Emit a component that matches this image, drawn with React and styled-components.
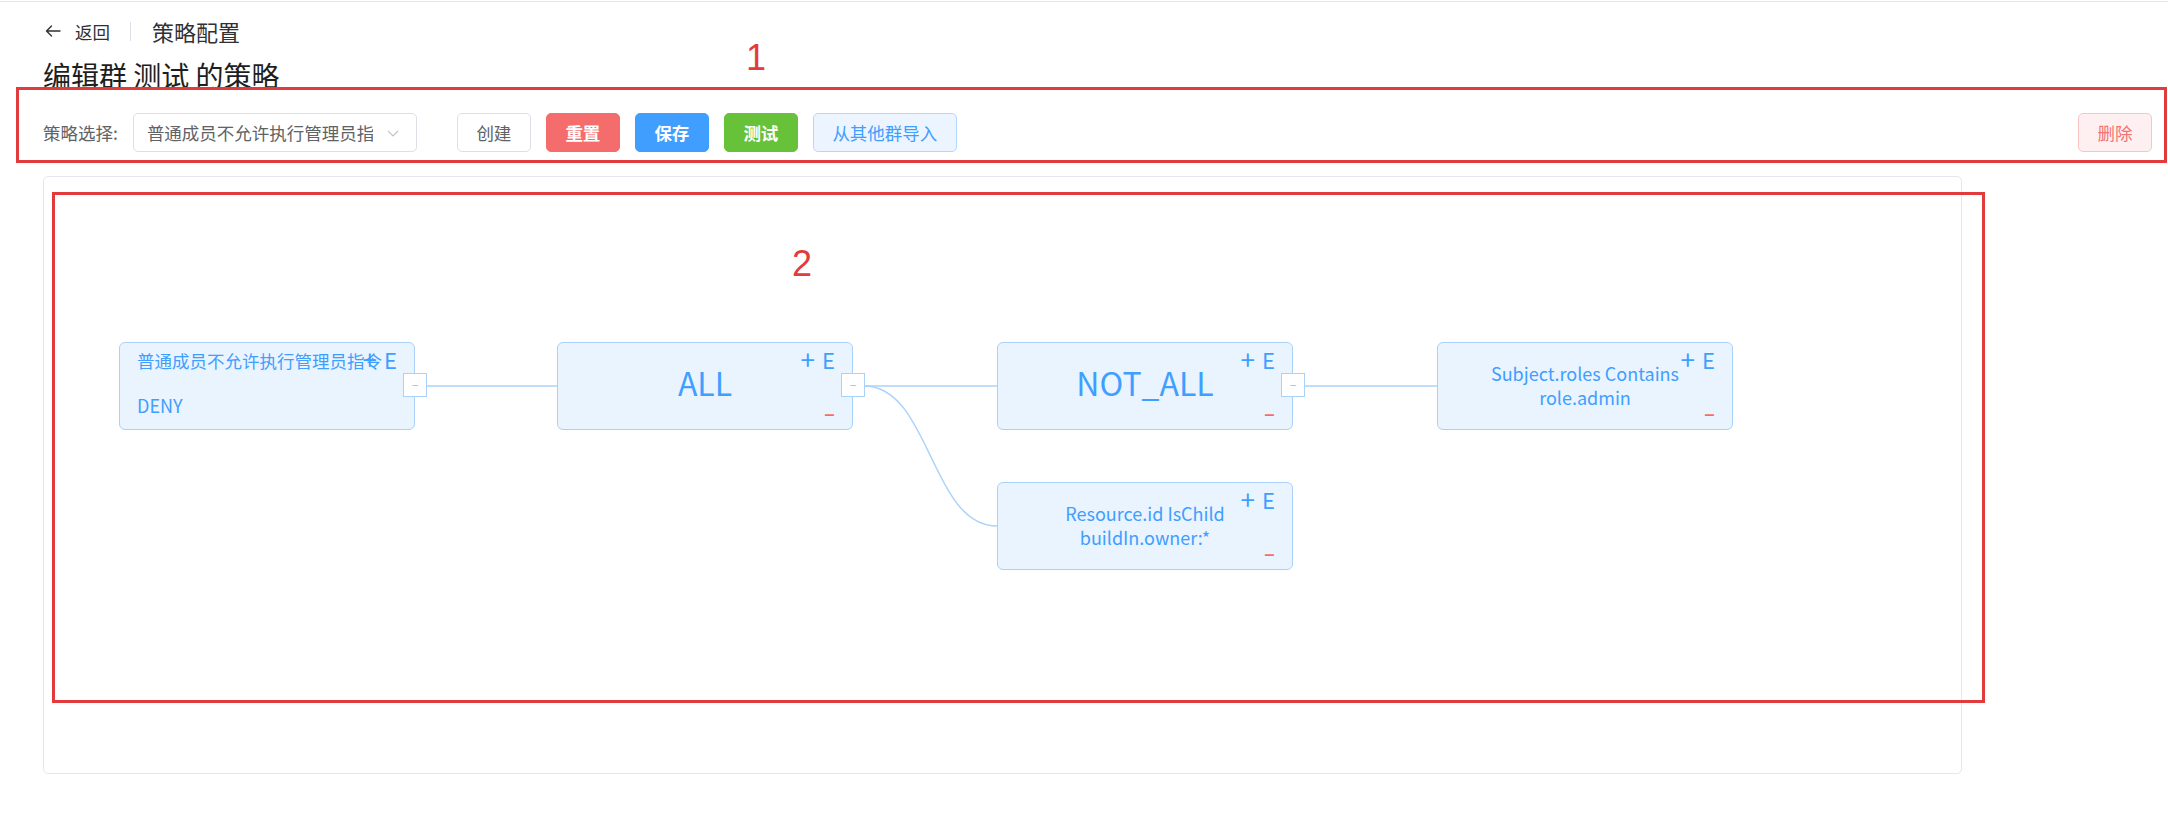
import React from "react";
import styled, { createGlobalStyle } from "styled-components";

const GlobalStyle = createGlobalStyle`
  html, body { margin: 0; padding: 0; background: #ffffff; }
  body {
    font-family: "Noto Sans CJK SC", "Noto Sans", sans-serif;
    color: #303133;
  }
  * { box-sizing: border-box; }
`;

const Root = styled.div`
  position: relative;
  width: 2168px;
  min-height: 830px;
  overflow: hidden;
`;

const TopRule = styled.div`
  height: 1px;
  margin-top: 1px;
  background: #e4e7ed;
`;

const Page = styled.div`
  padding: 0 16px 0 43px;
`;

const Header = styled.div`
  display: flex;
  align-items: center;
  height: 40px;
  margin-top: 9px;
`;

const BackLink = styled.div`
  display: flex;
  align-items: center;
  gap: 14px;
  font-size: 17.5px;
  color: #303133;
  svg { margin-left: 2px; }
`;

const Divider = styled.div`
  width: 1px;
  height: 19px;
  background: #dcdfe6;
  margin: 0 21px 0 20px;
`;

const HeaderTitle = styled.div`
  font-size: 22px;
  color: #303133;
`;

const Title = styled.h1`
  margin: 0;
  font-size: 28px;
  line-height: 48px;
  font-weight: 400;
  color: #1d1e20;
`;

const Toolbar = styled.div`
  display: flex;
  align-items: center;
  height: 39px;
  margin-top: 14px;
`;

const FieldLabel = styled.span`
  font-size: 17.5px;
  color: #606266;
  margin-right: 15px;
`;

const Select = styled.div`
  position: relative;
  width: 284px;
  height: 39px;
  border: 1px solid #dcdfe6;
  border-radius: 5px;
  padding: 0 43px 0 13px;
  display: flex;
  align-items: center;
  overflow: hidden;
  margin-right: 40px;
`;

const SelectValue = styled.span`
  font-size: 17.5px;
  color: #606266;
  white-space: nowrap;
  overflow: hidden;
`;

const Chevron = styled.svg`
  position: absolute;
  right: 17px;
  top: 16px;
`;

const tones = {
  default: { bg: "#ffffff", border: "#dcdfe6", color: "#606266", weight: 400 },
  danger: { bg: "#f56c6c", border: "#f56c6c", color: "#ffffff", weight: 700 },
  primary: { bg: "#409eff", border: "#409eff", color: "#ffffff", weight: 700 },
  success: { bg: "#67c23a", border: "#67c23a", color: "#ffffff", weight: 700 },
  primaryPlain: { bg: "#ecf5ff", border: "#b3d8ff", color: "#409eff", weight: 400 },
  dangerPlain: { bg: "#fef0f0", border: "#fbc4c4", color: "#f37373", weight: 400 },
};

const Button = styled.button`
  height: 39px;
  padding: 0 18.5px;
  margin-right: 15px;
  border-radius: 5px;
  font-family: inherit;
  font-size: 17.5px;
  line-height: 1;
  cursor: pointer;
  background: ${(p) => tones[p.$tone].bg};
  border: 1px solid ${(p) => tones[p.$tone].border};
  color: ${(p) => tones[p.$tone].color};
  font-weight: ${(p) => tones[p.$tone].weight};
`;

const Spacer = styled.div`
  flex: 1;
`;

const DeleteButton = styled(Button)`
  margin-right: 0;
`;

const Panel = styled.div`
  position: relative;
  width: 1919px;
  height: 598px;
  margin-top: 24px;
  border: 1px solid #e4e7ed;
  border-radius: 5px;
  background: #ffffff;
`;

const Edges = styled.svg`
  position: absolute;
  left: 0;
  top: 0;
  width: 100%;
  height: 100%;
`;

const NODE_W = 296;
const NODE_H = 88;

const Node = styled.div`
  position: absolute;
  left: ${(p) => p.$x}px;
  top: ${(p) => p.$y}px;
  width: ${NODE_W}px;
  height: ${NODE_H}px;
  background: #e9f4ff;
  border: 1px solid #a9d1fa;
  border-radius: 6px;
  color: #409eff;
  display: flex;
  flex-direction: column;
  justify-content: ${(p) => (p.$kind === "root" ? "flex-start" : "center")};
  align-items: ${(p) => (p.$kind === "root" ? "flex-start" : "center")};
  padding: ${(p) =>
    p.$kind === "root" ? "6px 0 0 17px" : p.$kind === "op" ? "0 0 8px 0" : "0 0 3px 0"};
`;

const RootName = styled.div`
  font-size: 17.5px;
  line-height: 24px;
  white-space: nowrap;
`;

const RootEffect = styled.div`
  font-size: 18px;
  line-height: 24px;
  margin-top: 20px;
`;

const OpLabel = styled.div`
  font-size: 32px;
  line-height: 40px;
`;

const CondText = styled.div`
  font-size: 18px;
  line-height: 24px;
  text-align: center;
`;

const Actions = styled.div`
  position: absolute;
  top: 5px;
  right: 17px;
  display: flex;
  align-items: center;
  gap: 7px;
  color: #409eff;
`;

const Plus = styled.span`
  font-size: 26px;
  line-height: 22px;
`;

const Edit = styled.span`
  font-size: 22px;
  line-height: 22px;
`;

const Remove = styled.span`
  position: absolute;
  right: 17px;
  top: 60px;
  font-size: 20px;
  line-height: 20px;
  font-weight: 700;
  color: #f56c6c;
`;

const Collapse = styled.div`
  position: absolute;
  top: 30px;
  right: -13px;
  width: 24px;
  height: 24px;
  background: #ffffff;
  border: 1px solid #a9d1fa;
  display: flex;
  align-items: center;
  justify-content: center;
  font-size: 12px;
  line-height: 1;
  color: #9dbfe2;
  z-index: 1;
`;

const Annotation = styled.div`
  position: absolute;
  left: ${(p) => p.$x}px;
  top: ${(p) => p.$y}px;
  width: ${(p) => p.$w}px;
  height: ${(p) => p.$h}px;
  border: 3px solid #e23b3b;
  pointer-events: none;
`;

const AnnotationLabel = styled.div`
  position: absolute;
  left: ${(p) => p.$x}px;
  top: ${(p) => p.$y}px;
  font-family: "Liberation Sans", Arial, sans-serif;
  font-size: 36px;
  line-height: 36px;
  color: #e23b3b;
  pointer-events: none;
`;

const nodes = [
  { id: 1, x: 75, y: 165, kind: "root", title: "普通成员不允许执行管理员指令", effect: "DENY", collapse: true },
  { id: 2, x: 513, y: 165, kind: "op", label: "ALL", collapse: true, remove: true },
  { id: 3, x: 953, y: 165, kind: "op", label: "NOT_ALL", collapse: true, remove: true },
  { id: 4, x: 1393, y: 165, kind: "cond", lines: ["Subject.roles Contains", "role.admin"], remove: true },
  { id: 5, x: 953, y: 305, kind: "cond", lines: ["Resource.id IsChild", "buildIn.owner:*"], remove: true },
];

const edges = [
  [1, 2],
  [2, 3],
  [2, 5],
  [3, 4],
];

function edgePath(a, b) {
  const x1 = a.x + NODE_W + 11;
  const y1 = a.y + NODE_H / 2;
  const x2 = b.x;
  const y2 = b.y + NODE_H / 2;
  if (y1 === y2) return `M${x1} ${y1} L${x2} ${y2}`;
  const mx = (x1 + x2) / 2;
  return `M${x1} ${y1} C${mx} ${y1}, ${mx} ${y2}, ${x2} ${y2}`;
}

function PolicyNode({ node }) {
  return (
    <Node $x={node.x} $y={node.y} $kind={node.kind}>
      {node.kind === "root" && (
        <>
          <RootName>{node.title}</RootName>
          <RootEffect>{node.effect}</RootEffect>
        </>
      )}
      {node.kind === "op" && <OpLabel>{node.label}</OpLabel>}
      {node.kind === "cond" &&
        node.lines.map((l) => <CondText key={l}>{l}</CondText>)}
      <Actions>
        <Plus>+</Plus>
        <Edit>E</Edit>
      </Actions>
      {node.remove && <Remove>–</Remove>}
      {node.collapse && <Collapse>−</Collapse>}
    </Node>
  );
}

export default function App() {
  const byId = Object.fromEntries(nodes.map((n) => [n.id, n]));
  return (
    <Root>
      <GlobalStyle />
      <TopRule />
      <Page>
        <Header>
          <BackLink>
            <svg width="16" height="12" viewBox="0 0 16 12" fill="none">
              <path d="M15 6H1.5M6.5 1L1.5 6L6.5 11" stroke="#303133" strokeWidth="1.4" strokeLinecap="round" strokeLinejoin="round" />
            </svg>
            <span>返回</span>
          </BackLink>
          <Divider />
          <HeaderTitle>策略配置</HeaderTitle>
        </Header>
        <Title>编辑群 测试 的策略</Title>
        <Toolbar>
          <FieldLabel>策略选择:</FieldLabel>
          <Select>
            <SelectValue>普通成员不允许执行管理员指令</SelectValue>
            <Chevron width="12" height="7" viewBox="0 0 12 7" fill="none">
              <path d="M1 1L6 6L11 1" stroke="#c0c4cc" strokeWidth="1.2" />
            </Chevron>
          </Select>
          <Button $tone="default">创建</Button>
          <Button $tone="danger">重置</Button>
          <Button $tone="primary">保存</Button>
          <Button $tone="success">测试</Button>
          <Button $tone="primaryPlain">从其他群导入</Button>
          <Spacer />
          <DeleteButton $tone="dangerPlain">删除</DeleteButton>
        </Toolbar>
        <Panel>
          <Edges>
            {edges.map(([a, b]) => (
              <path
                key={`${a}-${b}`}
                d={edgePath(byId[a], byId[b])}
                stroke="#abd2fa"
                strokeWidth="1.5"
                fill="none"
              />
            ))}
          </Edges>
          {nodes.map((n) => (
            <PolicyNode key={n.id} node={n} />
          ))}
        </Panel>
      </Page>
      <Annotation $x={16} $y={87} $w={2151} $h={76} />
      <Annotation $x={52} $y={192} $w={1933} $h={511} />
      <AnnotationLabel $x={746} $y={40}>1</AnnotationLabel>
      <AnnotationLabel $x={792} $y={246}>2</AnnotationLabel>
    </Root>
  );
}
